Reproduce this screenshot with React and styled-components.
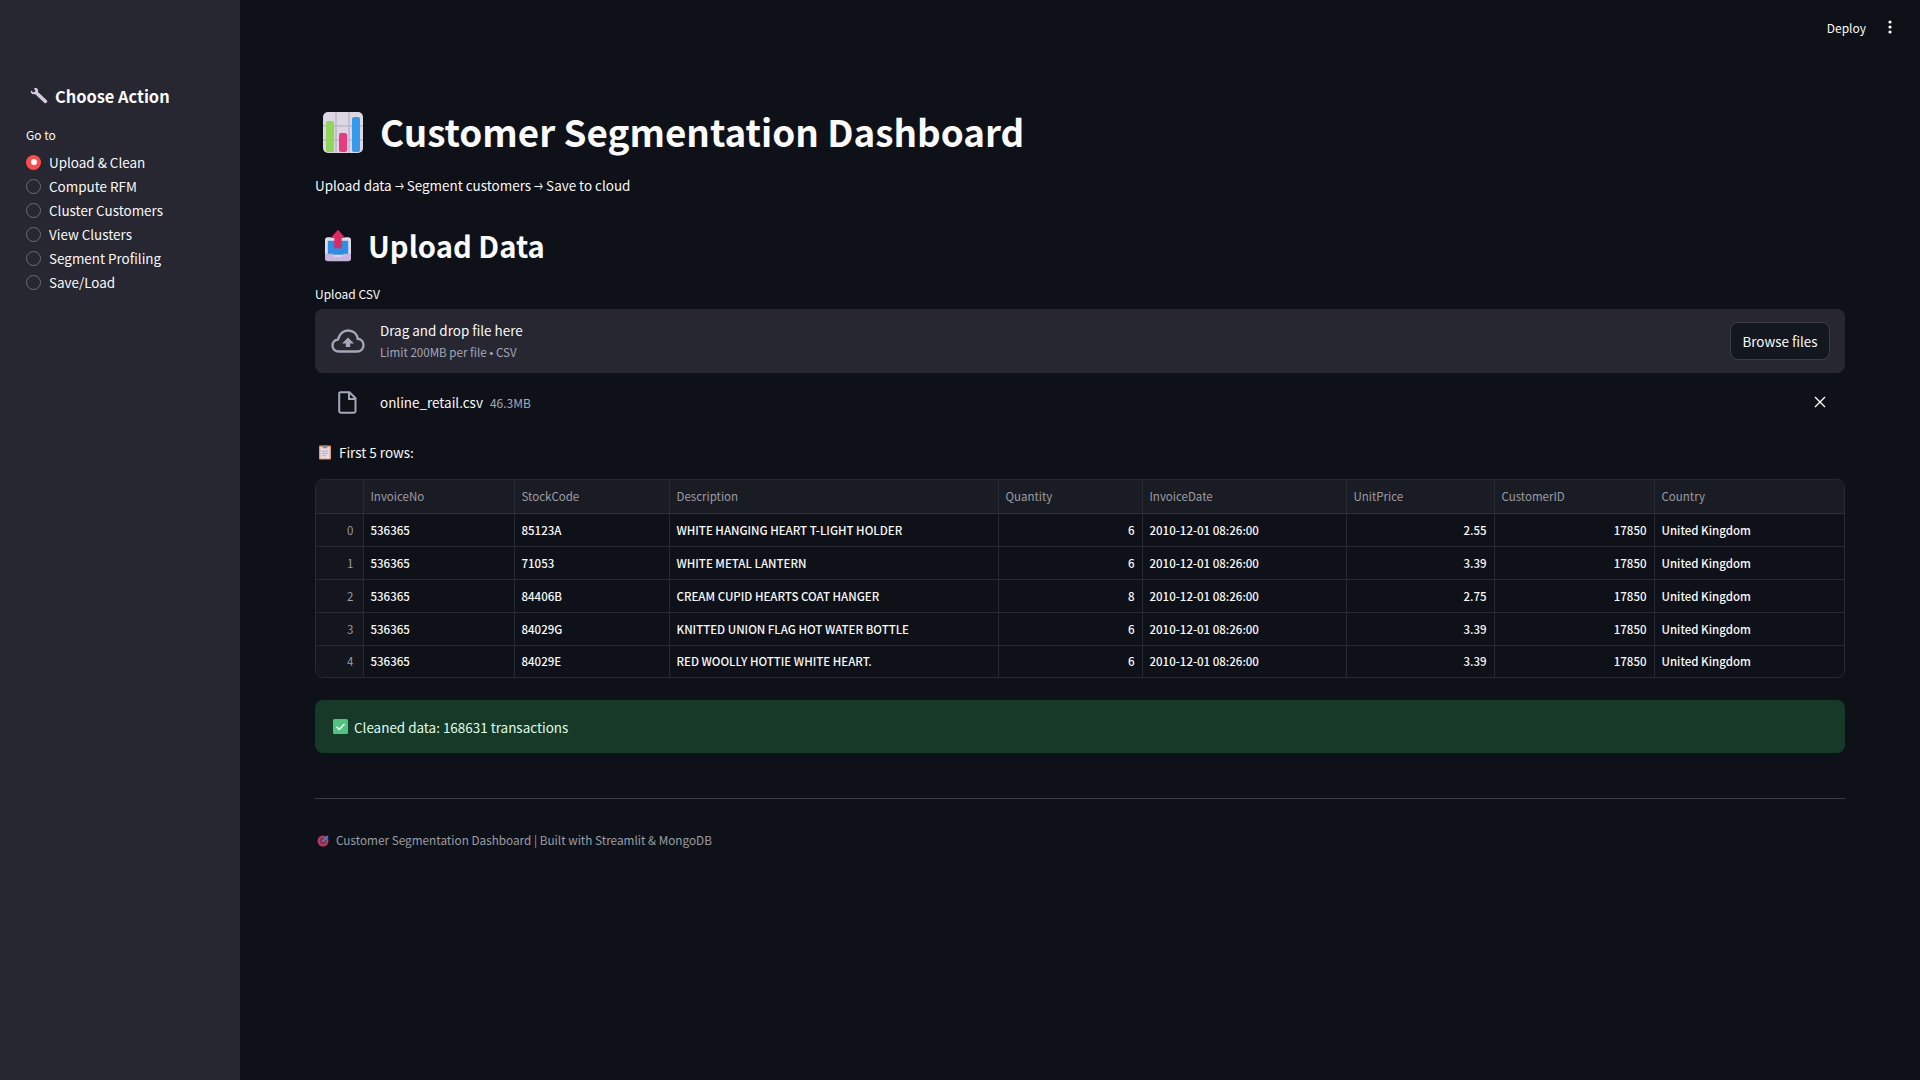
import React from "react";
import styled, { createGlobalStyle } from "styled-components";

const FONT = `"Noto Sans CJK SC", "Noto Sans", sans-serif`;

const Global = createGlobalStyle`
  html, body { margin: 0; padding: 0; background: #0e1117; }
  #root { width: 1920px; height: 1080px; overflow: hidden; }
  * { box-sizing: border-box; }
`;

const Shell = styled.div`
  display: flex; width: 1920px; height: 1080px;
  background: #0e1117; color: #fafafa; font-family: ${FONT};
`;
const Sidebar = styled.aside`
  width: 240px; flex: none; background: #262730; padding: 82px 0 0 26px;
`;
const SideTitle = styled.h2`
  margin: 0 0 15px 3px; display: flex; align-items: center; gap: 6px;
  font-size: 16.4px; line-height: 28px; font-weight: 600; color: #fafafa;
`;
const SmallLabel = styled.div`
  font-size: 12px; line-height: 20px; color: #fafafa;
`;
const RadioList = styled.div`
  display: flex; flex-direction: column; margin-top: 5px;
`;
const RadioRow = styled.div`
  display: flex; align-items: center; gap: 8px; height: 24px;
  font-size: 13.45px; color: #fafafa;
`;
const RadioDot = styled.span`
  width: 15px; height: 15px; border-radius: 50%; flex: none;
  display: flex; align-items: center; justify-content: center;
  background: ${p => (p.$on ? "#ff4b4b" : "transparent")};
  border: ${p => (p.$on ? "none" : "1px solid #6c6d75")};
  &::after { content: ""; width: 6px; height: 6px; border-radius: 50%;
    background: ${p => (p.$on ? "#fff" : "transparent")}; }
`;
const Main = styled.main`
  flex: 1; min-width: 0; display: flex; flex-direction: column;
`;
const TopBar = styled.header`
  height: 54px; flex: none; display: flex; align-items: center; justify-content: flex-end;
  gap: 22px; padding-right: 28px; font-size: 12px; color: #fafafa;
`;
const Content = styled.div`
  padding: 49px 75px 0; display: flex; flex-direction: column;
`;
const Title = styled.h1`
  margin: 0; display: flex; align-items: center; gap: 17px; padding-left: 8px;
  font-size: 36.8px; line-height: 56px; font-weight: 700; color: #fafafa;
  svg { margin-top: 3px; }
`;
const Tagline = styled.p`
  margin: 15px 0 0; font-size: 13.45px; line-height: 22px; color: #fafafa;
`;
const Arrow = styled.span`
  display: inline-block; width: 9px; transform: scaleX(0.67); transform-origin: left center;
`;
const Heading = styled.h2`
  margin: 27px 0 0; display: flex; align-items: center; gap: 17px; padding-left: 10px;
  font-size: 29.2px; line-height: 44px; font-weight: 600; color: #fafafa;
`;
const FieldLabel = styled.div`
  margin-top: 17px; font-size: 12px; line-height: 20px; color: #fafafa;
`;
const Drop = styled.div`
  margin-top: 5px; height: 64px; background: #262730; border-radius: 8px;
  display: flex; align-items: center; padding: 0 15px 0 16px;
`;
const IconCell = styled.div`
  width: 49px; flex: none; display: flex; align-items: center; color: #a3a8b8;
`;
const DropText = styled.div`
  flex: 1; display: flex; flex-direction: column; gap: 3px;
`;
const DropTitle = styled.div`font-size: 13.45px; line-height: 20px; color: #fafafa;`;
const DropHint = styled.div`font-size: 11.6px; line-height: 18px; color: #a3a8b8;`;
const Bullet = styled.span`font-family: "Liberation Sans", sans-serif;`;
const BrowseButton = styled.button`
  height: 38px; width: 100px; padding: 0; border-radius: 8px;
  border: 1px solid #3d3f49; background: #13171f; color: #fafafa;
  font: 400 13.45px ${FONT};
`;
const FileRow = styled.div`
  height: 58px; display: flex; align-items: center; padding: 0 19px 0 16px;
`;
const FileIconCell = styled(IconCell)`padding-left: 7px;`;
const FileName = styled.span`font-size: 13.45px; color: #fafafa;`;
const FileSize = styled.span`margin-left: 7px; font-size: 12px; color: #a3a8b8;`;
const CloseCell = styled.div`margin-left: auto; display: flex; color: #fafafa;`;
const RowsLabel = styled.div`
  margin-top: 10px; display: flex; align-items: center; gap: 8px; padding-left: 4px;
  font-size: 13.45px; line-height: 22px; color: #fafafa;
`;
const TableWrap = styled.div`
  margin-top: 16px; border: 1px solid #262a32; border-radius: 8px; overflow: hidden;
`;
const Table = styled.table`
  width: 100%; border-collapse: collapse; table-layout: fixed; font-size: 11.5px;
  font-weight: 500;
`;
const Th = styled.th`
  height: 33px; padding: 0 7px; text-align: left; font-weight: 400; color: #9a9ca3;
  background: #1a1c24; border-bottom: 1px solid #2d3038; border-left: 1px solid #262a32;
  &:first-child { border-left: 0; }
`;
const Td = styled.td`
  height: 33px; padding: 0 7px; color: #fafafa; text-align: ${p => (p.$num ? "right" : "left")};
  border-top: 1px solid #262a32; border-left: 1px solid #262a32; white-space: nowrap; overflow: hidden;
  tr:first-child > & { border-top: 0; }
  tr:last-child > & { height: 32px; }
`;
const IndexTd = styled(Td)`
  border-left: 0; color: #9a9ca3; background: #13161d; font-weight: 400; text-align: right;
  padding-right: 9px;
`;
const Success = styled.div`
  margin-top: 22px; height: 53px; border-radius: 8px; background: #173928; color: #dffde9;
  display: flex; align-items: center; gap: 6px; padding-left: 18px; font-size: 13.45px;
`;
const Divider = styled.hr`
  margin: 45px 0 0; height: 1px; border: 0; background: #3a3c44;
`;
const Footer = styled.div`
  margin-top: 31px; display: flex; align-items: center; gap: 6px; padding-left: 2px;
  font-size: 11.75px; line-height: 20px; color: #9c9ea5;
`;

const ChartEmoji = () => (
  <svg width="40" height="41" viewBox="1 0 40 41">
    <rect x="1" y="0" width="40" height="41" rx="5" fill="#dcd7e2" />
    <path d="M14 0v41M27 0v41M1 14h40M1 28h40" stroke="#bdb6c6" strokeWidth="1.5" />
    <rect x="4" y="9" width="8" height="31" rx="2" fill="#8fd65a" />
    <rect x="17" y="21" width="8" height="19" rx="2" fill="#e83b82" />
    <rect x="30" y="5" width="8" height="35" rx="2" fill="#3498ec" />
  </svg>
);
const OutboxEmoji = () => (
  <svg width="26" height="33" viewBox="0 0 28 34">
    <rect x="0" y="8" width="28" height="25" rx="3" fill="#dcdbe6" />
    <rect x="3" y="12" width="22" height="15" rx="1" fill="#2d8fe2" />
    <path d="M14 0l8 9h-4v11h-8V9H6z" fill="#dd2a62" />
    <path d="M0 26h8l2 3h8l2-3h8v5a3 3 0 0 1-3 3H3a3 3 0 0 1-3-3z" fill="#c8b4de" />
  </svg>
);
const Wrench = () => (
  <svg width="20" height="20" viewBox="0 0 20 20">
    <path d="M2 4.500L4.500 6.500 6.500 5 5 2.500C7.500 1 10 3 9 6l9 8.500c1 1.500-1 3.500-2.500 2.500L6 8C3.500 9 1 7 2 4.500z" fill="#d6cbe0" />
  </svg>
);
const Clipboard = () => (
  <svg width="12" height="15" viewBox="0 0 13 15">
    <rect width="13" height="15" rx="1" fill="#e59a5e" />
    <rect x="1.500" y="1.500" width="10" height="12.500" fill="#e4e0ee" />
    <rect x="4" y="0" width="5" height="3" fill="#8c8796" />
    <path d="M3 6h7M3 8.500h7M3 11h5" stroke="#a9a4bb" />
  </svg>
);
const CheckBox = () => (
  <svg width="15" height="15" viewBox="0 0 15 15">
    <rect width="15" height="15" rx="1.500" fill="#4fc47e" />
    <path d="M3.500 7.800l2.700 2.600 5.300-5.400" stroke="#fff" strokeWidth="1.500" fill="none" />
  </svg>
);
const Target = () => (
  <svg width="13" height="13" viewBox="0 0 13 13">
    <circle cx="6" cy="7" r="5.500" fill="#b83a5c" />
    <circle cx="6" cy="7" r="3.200" fill="#7d3150" />
    <circle cx="6" cy="7" r="1.500" fill="#b83a5c" />
    <path d="M6 7l5-5" stroke="#3b82c4" strokeWidth="2" />
  </svg>
);
const Cloud = () => (
  <svg width="34" height="24" viewBox="0 0 34 24" fill="none">
    <path d="M8 22.500C4 22.500 1.500 20 1.500 16.500S4 10.800 7 10.500C8.200 5 12.500 1.500 17 1.500c5.500 0 9 3.800 9.800 8.300 3.300.4 5.700 3 5.700 6.200 0 3.800-2.700 6.500-6.500 6.500z" stroke="currentColor" strokeWidth="2.400" />
    <path d="M17 8.500l6 6h-3.800V18h-4.400v-3.500H11z" fill="currentColor" />
  </svg>
);
const FileIcon = () => (
  <svg width="19" height="23" viewBox="0 0 19 23" fill="none">
    <path d="M2.500 1.200h9l6 6V20a1.800 1.800 0 0 1-1.800 1.800H3A1.800 1.800 0 0 1 1.200 20V2.500A1.300 1.300 0 0 1 2.500 1.200zM11 1.500V8h6" stroke="currentColor" strokeWidth="2" />
  </svg>
);
const Close = () => (
  <svg width="12" height="12" viewBox="0 0 12 12">
    <path d="M1 1l10 10M11 1L1 11" stroke="currentColor" strokeWidth="1.400" />
  </svg>
);
const Kebab = () => (
  <svg width="4" height="14" viewBox="0 0 4 14" fill="#fafafa">
    <circle cx="2" cy="2" r="1.600" /><circle cx="2" cy="7" r="1.600" /><circle cx="2" cy="12" r="1.600" />
  </svg>
);

const nav = ["Upload & Clean", "Compute RFM", "Cluster Customers", "View Clusters", "Segment Profiling", "Save/Load"];
const cols = [
  ["", 47], ["InvoiceNo", 151], ["StockCode", 155], ["Description", 329], ["Quantity", 144],
  ["InvoiceDate", 204], ["UnitPrice", 148], ["CustomerID", 160], ["Country", 190],
];
const rows = [
  ["536365", "85123A", "WHITE HANGING HEART T-LIGHT HOLDER", 6, "2.55"],
  ["536365", "71053", "WHITE METAL LANTERN", 6, "3.39"],
  ["536365", "84406B", "CREAM CUPID HEARTS COAT HANGER", 8, "2.75"],
  ["536365", "84029G", "KNITTED UNION FLAG HOT WATER BOTTLE", 6, "3.39"],
  ["536365", "84029E", "RED WOOLLY HOTTIE WHITE HEART.", 6, "3.39"],
];

export default function App() {
  return (
    <Shell>
      <Global />
      <Sidebar>
        <SideTitle><Wrench />Choose Action</SideTitle>
        <SmallLabel>Go to</SmallLabel>
        <RadioList>
          {nav.map((n, i) => (
            <RadioRow key={n}><RadioDot $on={i === 0} />{n}</RadioRow>
          ))}
        </RadioList>
      </Sidebar>
      <Main>
        <TopBar><span>Deploy</span><Kebab /></TopBar>
        <Content>
          <Title><ChartEmoji />Customer Segmentation Dashboard</Title>
          <Tagline>Upload data <Arrow>→</Arrow> Segment customers <Arrow>→</Arrow> Save to cloud</Tagline>
          <Heading><OutboxEmoji />Upload Data</Heading>
          <FieldLabel>Upload CSV</FieldLabel>
          <Drop>
            <IconCell><Cloud /></IconCell>
            <DropText>
              <DropTitle>Drag and drop file here</DropTitle>
              <DropHint>Limit 200MB per file <Bullet>•</Bullet> CSV</DropHint>
            </DropText>
            <BrowseButton>Browse files</BrowseButton>
          </Drop>
          <FileRow>
            <FileIconCell><FileIcon /></FileIconCell>
            <FileName>online_retail.csv</FileName>
            <FileSize>46.3MB</FileSize>
            <CloseCell><Close /></CloseCell>
          </FileRow>
          <RowsLabel><Clipboard />First 5 rows:</RowsLabel>
          <TableWrap>
            <Table>
              <colgroup>{cols.map(([n, w]) => <col key={n} width={w} />)}</colgroup>
              <thead><tr>{cols.map(([n]) => <Th key={n}>{n}</Th>)}</tr></thead>
              <tbody>
                {rows.map((r, i) => (
                  <tr key={i}>
                    <IndexTd>{i}</IndexTd>
                    <Td>{r[0]}</Td>
                    <Td>{r[1]}</Td>
                    <Td>{r[2]}</Td>
                    <Td $num>{r[3]}</Td>
                    <Td>2010-12-01 08:26:00</Td>
                    <Td $num>{r[4]}</Td>
                    <Td $num>17850</Td>
                    <Td>United Kingdom</Td>
                  </tr>
                ))}
              </tbody>
            </Table>
          </TableWrap>
          <Success><CheckBox />Cleaned data: 168631 transactions</Success>
          <Divider />
          <Footer><Target />Customer Segmentation Dashboard | Built with Streamlit &amp; MongoDB</Footer>
        </Content>
      </Main>
    </Shell>
  );
}
